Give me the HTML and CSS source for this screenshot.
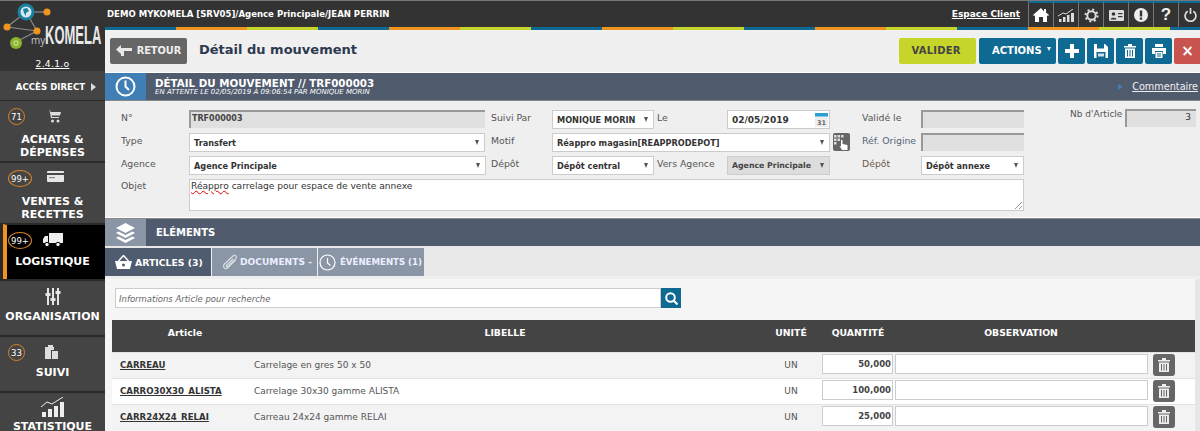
FILE: index.html
```html
<!DOCTYPE html>
<html lang="fr">
<head>
<meta charset="utf-8">
<title>Détail du mouvement</title>
<link rel="stylesheet" href="styles.css">
</head>
<body>
<div class="app">
  <aside class="side">
    <div class="logo">
      <svg class="logo-net" width="105" height="52" viewBox="0 0 105 52">
        <g stroke="#8d8d8d" stroke-width="1.2"><line x1="26" y1="11" x2="47" y2="11"/><line x1="26" y1="11" x2="37" y2="30"/><line x1="7" y1="26" x2="26" y2="11"/><line x1="7" y1="26" x2="37" y2="30"/><line x1="14" y1="42" x2="37" y2="30"/></g>
        <circle cx="26" cy="11" r="8.5" fill="#1b7f9e"/><circle cx="26" cy="11" r="5.5" fill="#d4e8f0"/><path d="M23 8l4-1 2 3-3 2v3l-2-3z" fill="#1b7f9e"/>
        <circle cx="47" cy="11" r="3.5" fill="#f0941f"/><circle cx="7" cy="26" r="3.5" fill="#f0941f"/><circle cx="37" cy="30" r="3.5" fill="#f0941f"/>
        <circle cx="16" cy="42" r="6" fill="#8cb32e"/><circle cx="16" cy="42" r="2.2" fill="none" stroke="#dce8b8" stroke-width="1"/>
      </svg>
      <div class="logo-name"><span class="logo-my">my</span><span class="logo-k">KOMELA</span></div>
      <a class="version">2.4.1.o</a>
    </div>
    <div class="direct">ACCÈS DIRECT<span class="direct-arrow"></span></div>
    <nav class="menu">
      <div class="mi mi-tall">
        <div class="mi-top"><span class="badge">71</span>
          <svg class="mi-ic" width="14" height="14" viewBox="0 0 14 14" fill="#ddd"><path d="M0 1h2.5l1.500 8h8V8H5l-.3-1.500H13L14 3H3.600L3 1z"/><circle cx="5.500" cy="12" r="1.500"/><circle cx="11" cy="12" r="1.500"/></svg></div>
        <div class="mi-t">ACHATS &amp;<br>DÉPENSES</div>
      </div>
      <div class="mi mi-tall">
        <div class="mi-top"><span class="badge wide">99+</span>
          <svg class="mi-ic" width="17" height="11" viewBox="0 0 17 11"><rect width="17" height="11" rx="1" fill="#e6e6e6"/><rect y="2" width="17" height="2" fill="#454545"/><rect x="2" y="6" width="6" height="1.200" fill="#888"/></svg></div>
        <div class="mi-t">VENTES &amp;<br>RECETTES</div>
      </div>
      <div class="mi active">
        <div class="mi-top"><span class="badge wide">99+</span>
          <svg class="mi-ic ic-truck" width="20" height="14" viewBox="0 0 20 14" fill="#eee"><rect x="6" y="0" width="14" height="10"/><path d="M0 10V6l2-3h3v7z"/><circle cx="4" cy="11.500" r="2.200" stroke="#000"/><circle cx="15" cy="11.500" r="2.200" stroke="#000"/></svg></div>
        <div class="mi-t">LOGISTIQUE</div>
      </div>
      <div class="mi mi-low">
        <div class="mi-top center">
          <svg width="16" height="17" viewBox="0 0 16 17" fill="#e6e6e6"><rect x="2" y="0" width="2" height="17"/><rect x="7" y="0" width="2" height="17"/><rect x="12" y="0" width="2" height="17"/><rect x="0.500" y="5" width="5" height="3"/><rect x="5.500" y="10" width="5" height="3"/><rect x="10.500" y="3" width="5" height="3"/></svg></div>
        <div class="mi-t">ORGANISATION</div>
      </div>
      <div class="mi mi-low">
        <div class="mi-top"><span class="badge">33</span>
          <svg class="mi-ic ic-suivi" width="13" height="14" viewBox="0 0 13 14" fill="#ddd"><path d="M0 2h3V0h5v2h1v3H6v9H0z"/><path d="M7 6h6v8H7z"/></svg></div>
        <div class="mi-t">SUIVI</div>
      </div>
      <div class="mi mi-stat">
        <div class="mi-top center">
          <svg width="24" height="20" viewBox="0 0 24 20" fill="#eee"><rect x="1" y="15" width="4" height="5"/><rect x="7" y="12" width="4" height="8"/><rect x="13" y="9" width="4" height="11"/><rect x="19" y="5" width="4" height="15"/><path d="M0 10l6-5 5 2 11-7" fill="none" stroke="#eee" stroke-width="1"/></svg></div>
        <div class="mi-t">STATISTIQUE</div>
      </div>
    </nav>
  </aside>

  <main class="main">
    <header class="topbar">
      <div class="topbar-row">
        <div class="crumb">DEMO MYKOMELA [SRV05]/Agence Principale/JEAN PERRIN</div>
        <a class="client">Espace Client</a>
        <div class="topicons">
          <span class="ti"><svg width="16" height="14" viewBox="0 0 16 14" fill="#fff"><path d="M8 0L0 7l1 1 1-.8V14h4V9h4v5h4V7.200l1 .8 1-1-3-2.600V1h-2v2.600z"/></svg></span>
          <span class="ti"><svg width="17" height="13" viewBox="0 0 17 13" fill="#ddd"><rect x="1" y="10" width="2.500" height="3"/><rect x="5" y="8" width="2.500" height="5"/><rect x="9" y="6" width="2.500" height="7"/><rect x="13" y="4" width="3" height="9"/><path d="M0 7l5-3 3 1 7-5" fill="none" stroke="#ddd"/></svg></span>
          <span class="ti"><svg width="15" height="15" viewBox="0 0 15 15"><circle cx="7.500" cy="7.500" r="4.200" fill="none" stroke="#ddd" stroke-width="2"/><circle cx="7.500" cy="7.500" r="6" fill="none" stroke="#ddd" stroke-width="2" stroke-dasharray="2 2.700"/></svg></span>
          <span class="ti"><svg width="15" height="11" viewBox="0 0 15 11"><rect width="15" height="11" rx="1" fill="#ddd"/><circle cx="4.500" cy="4" r="1.800" fill="#333"/><path d="M1.500 9.500c0-2.500 6-2.500 6 0z" fill="#333"/><rect x="9" y="3" width="4.500" height="1.200" fill="#333"/><rect x="9" y="6" width="4.500" height="1.200" fill="#333"/></svg></span>
          <span class="ti"><svg width="14" height="14" viewBox="0 0 14 14"><circle cx="7" cy="7" r="7" fill="#eee"/><rect x="5.800" y="2.500" width="2.400" height="6" fill="#333"/><rect x="5.800" y="9.500" width="2.400" height="2.200" fill="#333"/></svg></span>
          <span class="ti ti-q">?</span>
          <span class="ti ti-last"><svg width="13" height="14" viewBox="0 0 13 14" fill="none" stroke="#ddd" stroke-width="1.700"><path d="M3.700 3.300a5.400 5.400 0 1 0 5.600 0"/><line x1="6.500" y1="0" x2="6.500" y2="6"/></svg></span>
        </div>
      </div>
      <div class="stripe"></div>
    </header>

    <div class="toolbar">
      <button class="btn-back"><svg width="16" height="11" viewBox="0 0 16 11" fill="#e8e8e8"><path d="M0 4.500L5 0v3h11v3H8v5H5V6.500L5 9z"/></svg>RETOUR</button>
      <h1 class="title">Détail du mouvement</h1>
      <div class="actions">
        <button class="btn btn-valider">VALIDER</button>
        <button class="btn btn-blue btn-actions">ACTIONS<span class="caret"></span></button>
        <button class="btn btn-blue btn-ic"><svg width="14" height="14" viewBox="0 0 14 14" fill="#fff"><path d="M5 0h4v5h5v4H9v5H5V9H0V5h5z"/></svg></button>
        <button class="btn btn-blue btn-ic"><svg width="14" height="14" viewBox="0 0 14 14" fill="#fff"><path d="M0 0h11l3 3v11H0z"/><rect x="3" y="0" width="7" height="4.500" fill="#0f6a93"/><rect x="2.500" y="8" width="9" height="6" fill="#0f6a93"/><rect x="4" y="9.500" width="6" height="3" fill="#cfe0e8"/></svg></button>
        <button class="btn btn-blue btn-ic"><svg width="12" height="14" viewBox="0 0 12 14" fill="#fff"><rect x="0" y="2" width="12" height="1.500"/><rect x="4" y="0" width="4" height="2"/><path d="M1 4.500h10V14H1z"/><g fill="#0f6a93"><rect x="3" y="6" width="1" height="6.500"/><rect x="5.500" y="6" width="1" height="6.500"/><rect x="8" y="6" width="1" height="6.500"/></g></svg></button>
        <button class="btn btn-blue btn-ic"><svg width="14" height="14" viewBox="0 0 14 14" fill="#fff"><rect x="3" y="0" width="8" height="3"/><path d="M0 4h14v6h-3V7H3v3H0z"/><path d="M3.500 8h7v6h-7z"/><g fill="#0f6a93"><rect x="5" y="9.500" width="4" height="1"/><rect x="5" y="11.500" width="4" height="1"/></g></svg></button>
        <button class="btn btn-red">×</button>
      </div>
    </div>

    <section class="band">
      <div class="band-ic band-ic-blue"><svg width="21" height="21" viewBox="0 0 21 21" fill="none" stroke="#fff" stroke-width="2"><circle cx="10.500" cy="10.500" r="9"/><path d="M10.500 4.500v6l3.500 3.500"/></svg></div>
      <div class="band-txt">
        <div class="band-h">DÉTAIL DU MOUVEMENT // TRF000003</div>
        <div class="band-s">EN ATTENTE LE 02/05/2019 À 09:06:54 PAR MONIQUE MORIN</div>
      </div>
      <div class="band-link"><span class="tri"></span><a>Commentaire</a></div>
    </section>

    <form class="form">
      <label class="l c-1">N°</label>
      <div class="ro ro-val c-f1">TRF000003</div>
      <label class="l c-l2">Suivi Par</label>
      <div class="sel c-4">MONIQUE MORIN<span class="ar"></span></div>
      <label class="l c-5 pl2">Le</label>
      <div class="sel date c-6">02/05/2019<svg class="cal" width="13" height="14" viewBox="0 0 13 14"><rect width="13" height="14" fill="#eee"/><rect width="13" height="3.500" fill="#29a0d8"/><text x="6.500" y="11.500" font-size="6.500" text-anchor="middle" fill="#666" font-family="DejaVu Sans">31</text></svg></div>
      <label class="l c-8">Validé le</label>
      <div class="ro c-9"></div>
      <label class="l c-11 nb-l">Nb d'Article</label>
      <div class="ro nb c-12">3</div>

      <label class="l c-1">Type</label>
      <div class="sel c-f1">Transfert<span class="ar"></span></div>
      <label class="l c-l2">Motif</label>
      <div class="sel c-motif">Réappro magasin[REAPPRODEPOT]<span class="ar"></span></div>
      <button type="button" class="hand c-7"><svg width="15" height="15" viewBox="0 0 15 15" fill="#fff"><g fill="#ddd"><rect x="0" y="0" width="2.500" height="2.500"/><rect x="3.500" y="0" width="2.500" height="2.500"/><rect x="7" y="0" width="2.500" height="2.500"/><rect x="0" y="3.500" width="2.500" height="2.500"/><rect x="3.500" y="3.500" width="2.500" height="2.500"/><rect x="0" y="7" width="2.500" height="2.500"/></g><path d="M7 5h1.500v4l5 1v5H8L5.500 11l1.500.5z"/></svg></button>
      <label class="l c-8 l-blue">Réf. Origine</label>
      <div class="ro c-9"></div>

      <label class="l c-1">Agence</label>
      <div class="sel c-f1 wider">Agence Principale<span class="ar"></span></div>
      <label class="l c-l2">Dépôt</label>
      <div class="sel c-4">Dépôt central<span class="ar"></span></div>
      <label class="l c-5 pl2">Vers Agence</label>
      <div class="sel dis c-6">Agence Principale<span class="ar"></span></div>
      <label class="l c-8 l-brown">Dépôt</label>
      <div class="sel c-9">Dépôt annexe<span class="ar"></span></div>

      <label class="l c-1 l-top">Objet</label>
      <div class="area c-area"><span class="typo">Réappro</span> carrelage pour espace de vente annexe
        <svg class="grip" width="9" height="9" viewBox="0 0 9 9" stroke="#999"><line x1="1" y1="8" x2="8" y2="1"/><line x1="5" y1="8" x2="8" y2="5"/></svg></div>
    </form>

    <section class="band band-el">
      <div class="band-ic band-ic-grey"><svg width="19" height="20" viewBox="0 0 19 20" fill="#fff"><path d="M9.500 0L19 5l-9.500 5L0 5z"/><path d="M2.500 8.500L9.500 12l7-3.500L19 10l-9.500 5L0 10z"/><path d="M2.500 13.500L9.500 17l7-3.500L19 15l-9.500 5L0 15z"/></svg></div>
      <div class="band-el-t">ELÉMENTS</div>
    </section>

    <div class="tabs">
      <div class="tab on"><svg width="17" height="14" viewBox="0 0 17 14" fill="#fff"><path d="M0 6h17l-2 8H2z"/><path d="M3.500 6l5-5.500 5 5.500" fill="none" stroke="#fff" stroke-width="1.500"/><circle cx="8.500" cy="10" r="1.500" fill="#4f5b6e"/></svg>ARTICLES (3)</div>
      <div class="tab t2"><svg width="16" height="17" viewBox="0 0 16 17" fill="none" stroke="#d8dde3" stroke-width="1.200"><path d="M13.500 6L6 13.500c-3 2.500-6-.5-3.500-3.500L11 2c2-1.800 4.500.700 2.800 2.700L6 12.500c-1 1-2.300-.2-1.300-1.300L11 5"/></svg>DOCUMENTS -</div>
      <div class="tab t3"><svg width="17" height="17" viewBox="0 0 17 17" fill="none" stroke="#fff" stroke-width="1.200"><circle cx="8.500" cy="8.500" r="7.500"/><path d="M8.500 4v5l3 2.500"/></svg>ÉVÉNEMENTS (1)</div>
    </div>

    <section class="panel">
      <div class="search">
        <div class="search-in">Informations Article pour recherche</div>
        <button class="search-btn"><svg width="13" height="13" viewBox="0 0 13 13" fill="none" stroke="#fff" stroke-width="2"><circle cx="5.500" cy="5.500" r="4.300"/><line x1="8.500" y1="8.500" x2="12.500" y2="12.500"/></svg></button>
      </div>
      <table class="tbl">
        <colgroup><col class="w1"><col class="w2"><col class="w3"><col class="w4"><col class="w5"><col class="w6"></colgroup>
        <thead><tr><th class="th-art">Article</th><th>LIBELLE</th><th>UNITÉ</th><th>QUANTITÉ</th><th>OBSERVATION</th><th></th></tr></thead>
        <tbody>
          <tr><td class="code"><a>CARREAU</a></td><td class="lib">Carrelage en gres 50 x 50</td><td class="un">UN</td><td class="cell"><div class="q">50,000</div></td><td class="cell"><div class="o"></div></td><td class="cell"><button class="del"><svg width="12" height="14" viewBox="0 0 12 14" fill="#eee"><rect x="0" y="2" width="12" height="1.500"/><rect x="4" y="0" width="4" height="2"/><path d="M1 4.500h10V14H1z"/><g fill="#666"><rect x="3" y="6" width="1" height="6.500"/><rect x="5.500" y="6" width="1" height="6.500"/><rect x="8" y="6" width="1" height="6.500"/></g></svg></button></td></tr>
          <tr><td class="code"><a>CARRO30X30_ALISTA</a></td><td class="lib">Carrelage 30x30 gamme ALISTA</td><td class="un">UN</td><td class="cell"><div class="q">100,000</div></td><td class="cell"><div class="o"></div></td><td class="cell"><button class="del"><svg width="12" height="14" viewBox="0 0 12 14" fill="#eee"><rect x="0" y="2" width="12" height="1.500"/><rect x="4" y="0" width="4" height="2"/><path d="M1 4.500h10V14H1z"/><g fill="#666"><rect x="3" y="6" width="1" height="6.500"/><rect x="5.500" y="6" width="1" height="6.500"/><rect x="8" y="6" width="1" height="6.500"/></g></svg></button></td></tr>
          <tr><td class="code"><a>CARR24X24_RELAI</a></td><td class="lib">Carreau 24x24 gamme RELAI</td><td class="un">UN</td><td class="cell"><div class="q">25,000</div></td><td class="cell"><div class="o"></div></td><td class="cell"><button class="del"><svg width="12" height="14" viewBox="0 0 12 14" fill="#eee"><rect x="0" y="2" width="12" height="1.500"/><rect x="4" y="0" width="4" height="2"/><path d="M1 4.500h10V14H1z"/><g fill="#666"><rect x="3" y="6" width="1" height="6.500"/><rect x="5.500" y="6" width="1" height="6.500"/><rect x="8" y="6" width="1" height="6.500"/></g></svg></button></td></tr>
        </tbody>
      </table>
    </section>
  </main>
</div>
</body>
</html>
```
FILE: styles.css
```css
* { box-sizing: border-box; }
html, body { margin: 0; height: 431px; overflow: hidden; }
body { font-family: "DejaVu Sans", Verdana, sans-serif; font-size: 9px; color: #333; background: #efefef; }
button { font-family: inherit; border: 0; padding: 0; cursor: pointer; }
a { text-decoration: underline; }

.app { display: flex; height: 431px; overflow: hidden; }

/* sidebar */
.side { width: 105px; flex: none; background: #2f2f2f; border-top: 1px solid #777; color: #fff; font-weight: 700; }
.logo { height: 70px; background: #333; position: relative; display: flex; flex-direction: column; align-items: center; }
.logo-net { position: absolute; left: 0; top: 0; }
.logo-name { position: absolute; left: 31px; top: 22px; width: 70px; display: flex; align-items: baseline; color: #ddd; }
.logo-my { font: 400 10px "Open Sans", sans-serif; color: #c4c4c4; width: 14px; flex: none; }
.logo-k { font: 700 25px/24px "Liberation Sans", sans-serif; color: #e8e8e8; transform: scaleX(.52); transform-origin: left center; }
.version { position: absolute; top: 57px; left: 0; right: 0; text-align: center; font: 400 9.200px "DejaVu Sans", sans-serif; color: #fff; text-decoration: underline; letter-spacing: .3px; }
.direct { height: 29px; background: #444; display: flex; align-items: center; justify-content: center; gap: 6px; font-size: 8.600px; padding: 2px 0 0 7px; }
.direct-arrow { border-left: 5px solid #ddd; border-top: 4px solid transparent; border-bottom: 4px solid transparent; }
.menu { display: flex; flex-direction: column; gap: 1px; background: #2a2a2a; }
.mi { height: 55px; background: #444; padding: 7px 0 0 8px; border-top: 1px solid #2a2a2a; }
.mi-tall { height: 61px; }
.mi-top { height: 17px; display: flex; align-items: center; position: relative; }
.mi-top.center { justify-content: center; padding-right: 8px; }
.mi-ic { position: absolute; left: 39px; top: 1px; }
.ic-truck { left: 35px; }
.ic-suivi { left: 37px; }
.badge { width: 17px; height: 17px; border: 1px solid #d9842a; border-radius: 50%; display: flex; align-items: center; justify-content: center; font-size: 8.500px; font-weight: 400; color: #fff; }
.badge.wide { width: 24px; }
.mi-t { width: 105px; margin: 7px 0 0 -8px; font-size: 11px; line-height: 12px; text-align: center; white-space: nowrap; color: #fff; }
.mi-tall .mi-t { margin-top: 8px; line-height: 13px; }
.mi-low .mi-t { margin-top: 5.500px; }
.mi-stat .mi-top { margin-top: -2px; }
.mi-stat .mi-t { margin-top: 6px; }
.mi.active { background: #000; border-left: 4px solid #f0941f; margin-left: 3px; padding-left: 1px; }

/* main */
.main { flex: 1; min-width: 0; display: flex; flex-direction: column; }
.topbar { height: 30px; flex: none; background: #333; border-top: 1px solid #777; }
.topbar-row { height: 26px; display: flex; align-items: center; padding-left: 2px; }
.crumb { font-weight: 700; font-size: 8.550px; color: #fff; flex: 1; }
.client { color: #fff; font-weight: 700; font-size: 9px; margin-right: 8px; }
.topicons { display: flex; height: 26px; align-self: flex-start; }
.ti { width: 25px; height: 26px; border-left: 1px solid #777; border-top: 2px solid #0f6a93; display: flex; align-items: center; justify-content: center; }
.ti-last { width: 22px; justify-content: flex-start; padding-left: 5px; }
.ti-q { color: #eee; font: 700 17px "Liberation Sans", sans-serif; }
.stripe { height: 3px; background: repeating-linear-gradient(90deg, #0f6a93 0 71px, #f0941f 71px 142px, #c5d52a 142px 213px); }

.toolbar { height: 43px; flex: none; display: flex; align-items: center; padding: 0 0 1px 5px; background: #f0f0f0; border-bottom: 1px solid #fff; }
.btn-back { width: 77px; height: 26px; background: #666; border-radius: 2px; color: #eee; font-weight: 700; font-size: 9.800px; display: flex; align-items: center; justify-content: center; gap: 5px; }
.title { font-size: 13px; margin: -2px 0 0 12px; font-weight: 700; color: #2d3a4f; }
.actions { margin-left: auto; display: flex; gap: 2px; }
.btn { height: 26px; border-radius: 2px; font-weight: 700; font-size: 10px; display: flex; align-items: center; justify-content: center; }
.btn-valider { width: 77px; background: #c5d52a; color: #444; margin-right: 1px; letter-spacing: .2px; padding-right: 3px; }
.btn-blue { background: #0f6a93; color: #fff; }
.btn-actions { width: 77px; gap: 5px; justify-content: flex-start; padding-left: 13px; }
.btn-ic { width: 27px; }
.btn-red { width: 27px; margin-right: -1px; background: #c9534f; color: #fff; font-size: 15px; }
.caret { border-top: 4px solid #fff; border-left: 2.500px solid transparent; border-right: 2.500px solid transparent; margin-top: -3px; }

.band { height: 28px; flex: none; background: #505b6e; display: flex; align-items: stretch; color: #fff; border-bottom: 1px solid #888; }
.band-ic { width: 41px; flex: none; display: flex; align-items: center; justify-content: center; }
.band-ic-blue { background: #3f7fb5; }
.band-ic-grey { background: #8a96a5; }
.band-txt { padding: 5px 0 0 9px; font-weight: 700; }
.band-h { font-size: 10.300px; line-height: 11px; }
.band-s { font-size: 7px; line-height: 7px; font-style: italic; font-weight: 400; }
.band-link { margin-left: auto; display: flex; align-items: center; gap: 9px; padding-right: 2px; font-size: 9.700px; color: #f0f0f0; }
.tri { border-left: 5px solid #3f7fb5; border-top: 3.500px solid transparent; border-bottom: 3.500px solid transparent; }

.form { height: 117px; flex: none; padding: 9px 0 0 16px; background: #efefef; border-bottom: 1px solid #fff; display: grid; grid-template-columns: 68px 302px 61px 102px 73px 103px 32px 59px 103px 46px 55px 71px; grid-auto-rows: 23px; font-size: 8px; color: #333; }
.l { font-size: 9.300px; color: #555; padding-top: 2px; white-space: nowrap; }
.l-blue { color: #54657a; }
.l-brown { color: #6b5a4a; }
.pl2 { padding-left: 3px; }
.c-1 { grid-column: 1; }
.c-f1 { grid-column: 2; width: 296px; }
.c-f1.wider { width: 297px; }
.c-l2 { grid-column: 3; }
.c-4 { grid-column: 4; }
.c-5 { grid-column: 5; }
.c-6 { grid-column: 6; }
.c-7 { grid-column: 7; }
.c-8 { grid-column: 8; }
.c-9 { grid-column: 9; }
.c-11 { grid-column: 11; }
.c-12 { grid-column: 12; }
.c-motif { grid-column: 4 / span 3; width: 278px; }
.c-area { grid-column: 2 / span 8; }
.ro { height: 18px; background: #e0e0e0; border-top: 2px solid #999; border-left: 2px solid #999; font-weight: 700; }
.ro-val { padding: 2px 0 0 1px; color: #444; font-size: 8px; }
.nb { width: 71px; font-weight: 400; text-align: right; padding: 1px 5px 0 0; margin-top: -1px; font-size: 9px; }
.nb-l { margin-top: -3px; font-size: 9px; }
.sel { height: 19px; background: #fff; border: 1px solid #ccc; display: flex; align-items: center; padding-left: 4px; font-weight: 700; font-size: 8.200px; color: #333; white-space: nowrap; position: relative; }
.sel .ar { position: absolute; right: 5px; top: 6px; border-top: 5px solid #555; border-left: 2.500px solid transparent; border-right: 2.500px solid transparent; }
.date { font-size: 9px; }
.cal { position: absolute; right: 1px; top: 2px; }
.dis { background: #ddd; color: #444; font-size: 7.800px; }
.hand { width: 17px; height: 18px; background: #666; border-radius: 2px; margin-left: 3px; display: flex; align-items: center; justify-content: center; }
.l-top { padding-top: 1px; }
.area { height: 32px; background: #fff; border: 1px solid #ccc; padding: 1px 0 0 1px; font-size: 9.100px; color: #333; position: relative; }
.typo { text-decoration: underline wavy #d00; text-decoration-thickness: 1px; }
.grip { position: absolute; right: 0; bottom: 0; }

.band-el { border-top: 1px solid #888; border-bottom: 0; }
.band-el-t { align-self: center; padding-left: 10px; font-weight: 700; font-size: 10px; }

.tabs { height: 30px; flex: none; display: flex; padding-top: 2px; background: #e8e8e8; }
.tab { height: 28px; display: flex; align-items: center; color: #eef; font-weight: 700; white-space: nowrap; overflow: hidden; border-right: 1px solid #eee; }
.tab svg { flex: none; }
.tab.on { width: 107px; background: #4f5b6e; color: #fff; gap: 3px; padding-left: 10px; font-size: 9.300px; }
.tab.t2 { width: 106px; background: #8a96a5; gap: 2px; padding-left: 10px; font-size: 9.100px; }
.tab.t3 { width: 106px; background: #8a96a5; gap: 4px; padding-left: 1px; border-right: 0; font-size: 8.600px; }

.panel { flex: 1; background: #f5f5f5; margin-top: 3px; padding: 0 0 0 7px; border-right: 5px solid #e6e6e6; min-height: 0; }
.search { display: flex; height: 20px; margin: 9px 0 0 3px; }
.search-in { width: 546px; height: 20px; background: #fff; border: 1px solid #ccc; padding: 5px 0 0 3px; font-style: italic; font-size: 8.500px; font-weight: 400; color: #666; }
.search-btn { width: 20px; height: 20px; background: #0f6a93; display: flex; align-items: center; justify-content: center; }
.tbl { margin-top: 12px; border-collapse: collapse; table-layout: fixed; width: 1083px; }
.w1 { width: 138px; } .w2 { width: 510px; } .w3 { width: 62px; } .w4 { width: 72px; } .w5 { width: 254px; } .w6 { width: 47px; }
.tbl th { height: 32px; background: #444; color: #fff; font-weight: 700; font-size: 9.300px; padding: 0 0 6px; }
.th-art { padding-left: 8px !important; }
.tbl td { height: 26px; padding: 0; border-top: 1px solid #e2e2e2; }
.tbl tr:nth-child(odd) td { background: #f3f3f3; }
.tbl tr:nth-child(even) td { background: #fff; }
.code { padding-left: 8px !important; font-weight: 700; font-size: 8.600px; color: #333; }
.lib { font-size: 9px; color: #555; padding-left: 4px !important; }
.un { text-align: center; font-size: 9px; color: #555; }
.tbl .cell { vertical-align: top; padding-top: 1px; }
.q { height: 20px; width: 71px; background: #fff; border: 1px solid #ccc; text-align: right; padding: 4px 1px 0 0; font-weight: 700; font-size: 8.500px; color: #444; }
.o { height: 20px; width: 253px; margin-left: 1px; background: #fff; border: 1px solid #ccc; }
.del { width: 22px; height: 22px; margin-left: 5px; background: #666; border-radius: 3px; display: flex; align-items: center; justify-content: center; }
```
